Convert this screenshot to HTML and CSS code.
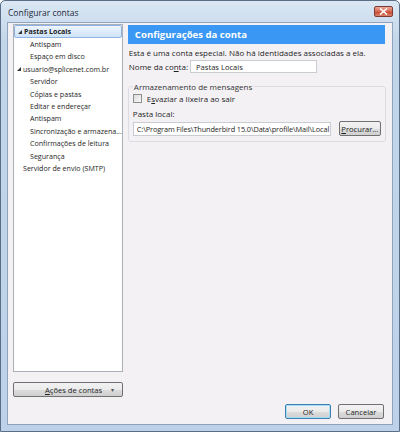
FILE: index.html
```html
<!DOCTYPE html>
<html lang="pt-BR">
<head>
    <meta charset="UTF-8">
    <title>Configurar contas</title>
    <link rel="stylesheet" href="styles.css">
</head>
<body>
    <div class="window">
        <div class="titlebar">
            <span class="title">Configurar contas</span>
            <span class="close">
                <svg width="9" height="7" viewBox="0 0 9 7"><path d="M1 0.5 L8 6.5 M8 0.5 L1 6.5" stroke="#fff" stroke-width="1.6"/></svg>
            </span>
        </div>
        <div class="client">
            <div class="main">
                <div class="sidebar">
                    <ul class="tree">
                        <li class="root selected"><span class="twisty"></span><b>Pastas Locais</b></li>
                        <li class="child">Antispam</li>
                        <li class="child">Espaço em disco</li>
                        <li class="root"><span class="twisty"></span>usuario@splicenet.com.br</li>
                        <li class="child">Servidor</li>
                        <li class="child">Cópias e pastas</li>
                        <li class="child">Editar e endereçar</li>
                        <li class="child">Antispam</li>
                        <li class="child">Sincronização e armazena...</li>
                        <li class="child">Confirmações de leitura</li>
                        <li class="child">Segurança</li>
                        <li class="leaf">Servidor de envio (SMTP)</li>
                    </ul>
                    <button class="btn actions"><span><u>A</u>ções de contas</span><span class="arrow">▾</span></button>
                </div>
                <div class="content">
                    <div class="header">Configurações da conta</div>
                    <p class="note">Esta é uma conta especial. Não há identidades associadas a ela.</p>
                    <div class="row name-row">
                        <label for="name">Nome da co<u>n</u>ta:</label>
                        <input id="name" class="field name" type="text" value="Pastas Locais">
                    </div>
                    <fieldset class="group">
                        <legend>Armazenamento de mensagens</legend>
                        <label class="check"><span class="box"></span>E<u>s</u>vaziar a lixeira ao sair</label>
                        <div class="sub">Pasta local:</div>
                        <div class="row path-row">
                            <input class="field path" type="text" value="C:\Program Files\Thunderbird 15.0\Data\profile\Mail\Local Folders">
                            <button class="btn browse"><u>P</u>rocurar...</button>
                        </div>
                    </fieldset>
                </div>
            </div>
            <div class="footer">
                <button class="btn ok">OK</button>
                <button class="btn">Cancelar</button>
            </div>
        </div>
    </div>
</body>
</html>
```

FILE: styles.css
```css
* {
    box-sizing: border-box;
}
body {
    margin: 0;
    font-family: "Open Sans", "Noto Sans", sans-serif;
    font-size: 8px;
    color: #1e1e1e;
}
.window {
    width: 400px;
    height: 432px;
    background: linear-gradient(#dbe7f3, #c2d6ea 40px, #bdd2e8);
    border: 1px solid #5a6f86;
    border-radius: 5px 5px 0 0;
    display: flex;
    flex-direction: column;
}
.titlebar {
    height: 21px;
    display: flex;
    align-items: center;
    justify-content: space-between;
    padding: 1px 6px 0 7px;
}
.title {
    font-size: 8.5px;
    color: #1c2a3a;
}
.close {
    width: 19px;
    height: 11px;
    margin-top: -2px;
    border: 1px solid #7d3b32;
    border-radius: 2px;
    background: linear-gradient(#eaa89a, #d6654f 50%, #c4412a 51%, #d9836c);
    display: flex;
    align-items: center;
    justify-content: center;
}
.client {
    flex: 1;
    margin: 0 6px 6px 6px;
    background: #f4f1f5;
    border: 1px solid #8ea4bc;
    display: flex;
    flex-direction: column;
    padding: 1px 7px 0 5px;
}
.main {
    display: flex;
    gap: 5px;
    height: 376px;
}
.sidebar {
    width: 110px;
    display: flex;
    flex-direction: column;
}
.tree {
    list-style: none;
    margin: 0;
    padding: 0;
    height: 348px;
    background: #fff;
    border: 1px solid #a9b0b8;
    font-size: 7.1px;
    overflow: hidden;
}
.tree li {
    height: 12.4px;
    line-height: 12.4px;
    white-space: nowrap;
    display: flex;
    align-items: center;
}
.tree .root {
    padding-left: 3px;
}
.tree .child {
    padding-left: 16px;
}
.tree .leaf {
    padding-left: 9px;
}
.tree .selected {
    background: linear-gradient(#eef5fd, #cfe3f8);
    border: 1px solid #8db2e3;
    border-radius: 2px;
    height: 13px;
}
.twisty {
    width: 0;
    height: 0;
    border-left: 4px solid transparent;
    border-bottom: 4px solid #333;
    margin-right: 2px;
}
.btn {
    font-family: inherit;
    font-size: 7.6px;
    color: #1e1e1e;
    background: linear-gradient(#f2f2f2, #ebebeb 50%, #dddddd 51%, #cfcfcf);
    border: 1px solid #707070;
    border-radius: 2px;
    padding: 0;
    height: 15px;
}
.actions {
    margin-top: 10px;
    display: flex;
    align-items: center;
    justify-content: space-between;
    padding: 0 8px 0 31px;
}
.arrow {
    font-size: 6px;
    color: #555;
}
.content {
    flex: 1;
    padding-top: 1px;
}
.header {
    height: 19px;
    background: #3a97f3;
    color: #fff;
    font-weight: bold;
    font-size: 9.6px;
    padding-left: 7px;
    line-height: 19px;
    margin-right: 1px;
}
.note {
    margin: 3px 0 0 1px;
    height: 11px;
    line-height: 11px;
    white-space: nowrap;
}
.row {
    display: flex;
    align-items: center;
}
.name-row {
    margin-top: 2px;
}
.row label {
    flex-shrink: 0;
    padding-left: 1px;
    margin-right: 2px;
    white-space: nowrap;
}
.field {
    font-family: inherit;
    font-size: 7.6px;
    color: #1e1e1e;
    border: 1px solid #c9cdd2;
    background: #fff;
    height: 13px;
    padding: 0 0 0 5px;
    outline: none;
}
.name {
    width: 127px;
}
.group {
    margin: 8px 0 0 0;
    padding: 0 3px 5px 4px;
    border: 1px solid #dcdde2;
    border-radius: 3px;
    width: 258px;
}
.group legend {
    padding: 0 1px;
    margin-left: 0;
    color: #333;
}
.check {
    display: flex;
    align-items: center;
    height: 12px;
}
.box {
    width: 9px;
    height: 9px;
    border: 1px solid #8f8f8f;
    background: linear-gradient(135deg, #dcdcdc, #f8f8f8);
    margin-right: 5px;
}
.sub {
    margin-top: 4px;
    height: 11px;
    line-height: 11px;
}
.path-row {
    margin-top: 2px;
    gap: 8px;
}
.path {
    width: 198px;
    height: 14px;
    padding-left: 3px;
    font-size: 7.3px;
    letter-spacing: -0.1px;
}
.browse {
    width: 42px;
    height: 15px;
}
.footer {
    display: flex;
    justify-content: flex-end;
    gap: 7px;
    padding-top: 4px;
    padding-right: 1px;
}
.footer .btn {
    width: 46px;
    height: 15px;
}
.footer .ok {
    border-color: #3c7fb1;
    box-shadow: inset 0 0 0 1px #a9dcf6;
}
```
